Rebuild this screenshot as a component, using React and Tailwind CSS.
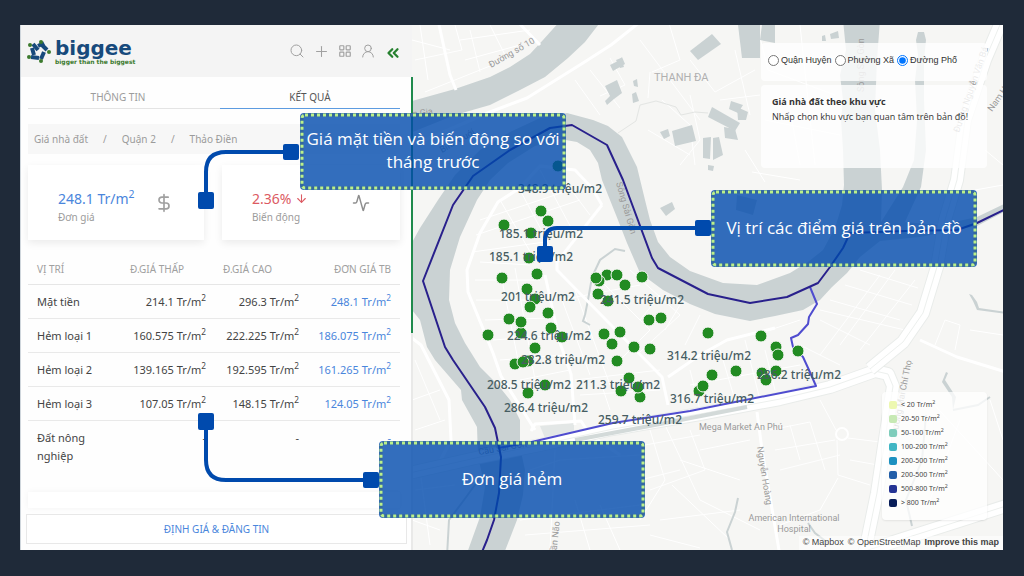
import React, { useState } from "react"
import {
  Activity,
  ArrowDown,
  ChevronsLeft,
  DollarSign,
  LayoutGrid,
  Plus,
  Search,
  UserRound
} from "lucide-react"

const priceRows = [
  { name: "Mặt tiền", low: "214.1", high: "296.3", avg: "248.1" },
  { name: "Hẻm loại 1", low: "160.575", high: "222.225", avg: "186.075" },
  { name: "Hẻm loại 2", low: "139.165", high: "192.595", avg: "161.265" },
  { name: "Hẻm loại 3", low: "107.05", high: "148.15", avg: "124.05" },
  { name: "Đất nông nghiệp", low: null, high: null, avg: null }
]

const legend = [
  { label: "< 20", color: "bg-[#edf8b1]" },
  { label: "20-50", color: "bg-[#c7e9b4]" },
  { label: "50-100", color: "bg-[#7fcdbb]" },
  { label: "100-200", color: "bg-[#41b6c4]" },
  { label: "200-500", color: "bg-[#1d91c0]" },
  { label: "200-500", color: "bg-[#225ea8]" },
  { label: "500-800", color: "bg-[#253494]" },
  { label: "> 800", color: "bg-[#081d58]" }
]

const levels = ["Quận Huyện", "Phường Xã", "Đường Phố"]

const points = [
  [558, 166], [541, 211], [548, 221], [504, 225], [531, 233], [529, 258], [537, 274],
  [502, 278], [527, 289], [535, 299], [530, 307], [548, 313], [509, 319], [521, 333],
  [521, 322], [551, 328], [562, 337], [488, 335], [535, 348], [515, 364], [528, 361],
  [523, 362], [607, 275], [599, 281], [596, 278], [617, 275], [625, 285], [642, 277],
  [608, 301], [598, 294], [649, 320], [661, 318], [604, 334], [620, 332], [612, 344],
  [634, 347], [650, 349], [617, 361], [708, 333], [545, 385], [528, 393], [629, 378],
  [621, 391], [640, 397], [638, 387], [761, 336], [776, 347], [778, 355], [798, 351],
  [712, 375], [699, 391], [703, 386], [736, 371], [762, 373], [776, 371], [766, 380]
]

const priceLabels = [
  [560, 193, "348.9"], [541, 238, "185.1"], [531, 261, "185.1"], [538, 301, "201"],
  [642, 304, "241.5"], [549, 340, "224.6"], [563, 364, "282.8"], [529, 389, "208.5"],
  [618, 389, "211.3"], [546, 412, "286.4"], [640, 424, "259.7"], [709, 360, "314.2"],
  [712, 403, "316.7"], [799, 379, "286.2"]
]

const water = [
  // upper channel
  "M405 103 L455 89 L490 77 L510 67 L530 54 L543 40 L561 20 L602 20 L585 42 L568 58 L545 77 L520 90 L490 105 L455 115 L405 135Z",
  // main loop
  "M405 255 L420 228 L438 200 L455 175 L480 150 L510 132 L540 118 L567 113 L593 120 L608 126 L622 137 L637 167 L645 200 L650 220 L658 242 L670 257 L690 271 L723 283 L757 285 L790 273 L808 262 L823 250 L835 228 L842 205 L844 185 L843 150 L841 120 L843 100 L840 75 L846 50 L843 20 L880 20 L877 60 L875 110 L880 150 L882 190 L881 222 L903 187 L914 160 L917 120 L915 80 L918 55 L916 40 L918 32 L924 32 L926 40 L924 60 L924 100 L926 150 L921 187 L905 222 L940 225 L977 217 L1006 203 L1006 211 L977 226 L920 237 L880 241 L860 257 L847 273 L832 287 L820 300 L803 310 L775 316 L750 321 L715 314 L690 304 L663 290 L640 273 L627 243 L616 215 L602 180 L598 163 L590 150 L577 142 L560 139 L535 146 L508 163 L490 180 L477 200 L460 237 L450 270 L449 300 L455 323 L465 343 L480 367 L498 385 L510 400 L520 420 L520 447 L525 470 L523 495 L517 520 L503 556 L466 556 L480 517 L485 487 L478 457 L477 427 L462 400 L461 390 L448 375 L435 360 L427 347 L420 320 L412 310 L405 310Z",
  "M977 302 L972 295 L969 294 L973 301 L977 310 L1006 314 L1006 312 L979 308Z",
  "M946 372 L942 382 L952 397 L953 410 L956 397 L945 380 L948 373Z"
]

const creeks = [
  "M585 315 L588 300 L592 277 L600 260 L615 249 L625 251",
  "M585 315 L583 321 L590 325",
  "M953 410 L978 405 L990 397",
  "M926 415 L922 460 L906 500 L912 526",
  "M732 550 L727 532 L735 512 L738 498",
  "M808 523 L815 533 L828 543",
  "M447 556 L449 520 L464 500 L480 478"
]

const roads = [
  "M408 147 L490 112 L527 98 L583 63 L611 45 L640 22",
  "M438 20 L450 75 L456 90",
  "M516 20 L540 45",
  "M520 188 L498 202 L480 233 L467 270 L468 292 L493 353 L501 376 L535 430",
  "M602 205 L557 262 L557 270 L662 377 L668 405",
  "M545 275 L560 343 L571 374 L575 425",
  "M602 205 L592 188 L575 170 L540 166 L520 188",
  "M668 377 L700 355 L727 340 L775 328",
  "M408 335 L421 345 L449 400 L451 440 L438 465",
  "M531 431 L535 424 L581 421 L590 435 L620 455",
  "M757 412 L762 450 L780 556",
  "M920 340 L957 357 L1006 372"
]

const highways = [
  "M405 474 L480 457 L540 445 L613 429 L700 414 L780 399 L830 387 L875 371 L888 374 L893 386 L877 493 L864 556",
  "M870 369 L903 342 L923 313 L937 267 L945 220 L957 180 L965 120 L985 60 L1002 20",
  "M862 552 L1006 506"
]

const streets = [
  "M420 25 L428 80 M455 25 L462 50 L415 60 M412 40 L450 50 M465 60 L520 45 M470 30 L480 72 M490 25 L505 55 M460 40 L530 30 M425 92 L490 66",
  "M575 80 L600 115 M590 70 L620 108 M610 58 L625 85 L600 96 M640 40 L700 120 M668 20 L680 60 L652 72 M650 72 L648 98 M662 100 L690 125 L695 165 M690 95 L700 140 L680 165 M648 130 L690 155",
  "M690 60 L715 92 L755 70 M735 50 L750 115 M720 100 L760 95 M757 25 L768 70 L835 95 M765 120 L840 135 M800 25 L815 165 M790 110 L800 165 M745 150 L765 182 M752 172 L800 180",
  "M480 220 L570 190 M476 235 L580 200 M472 252 L545 242 M500 200 L535 260 M520 190 L552 250 M540 170 L575 235 M560 175 L590 215 M480 262 L530 265",
  "M475 280 L540 280 M476 300 L545 300 M485 320 L550 318 M493 340 L560 335 M500 360 L565 355 M500 270 L520 370 M515 268 L535 380",
  "M562 300 L590 375 M575 290 L610 385 M600 280 L650 330 L620 360 M630 270 L680 315 L640 352 M660 295 L640 320 M680 305 L665 330 M700 315 L685 345 M560 300 L640 285",
  "M520 380 L570 370 M575 380 L660 370 M580 395 L660 390 M600 380 L610 410 M690 370 L700 410 M720 350 L735 400 M745 340 L760 400 M690 385 L800 365 M770 330 L800 320 M775 390 L765 350",
  "M820 310 L905 330 M830 300 L900 320 M845 285 L912 305 M860 270 L918 288 M840 345 L895 270 M820 355 L880 275 M860 350 L915 280 M800 345 L840 365 M880 260 L925 268 M820 320 L870 345",
  "M650 430 L665 480 L640 520 M665 425 L700 500 M690 430 L705 470 L650 490 M645 445 L700 435 M700 450 L750 440 M680 460 L740 480 M672 485 L730 540 M660 520 L740 510 M700 500 L760 530 M650 535 L700 548",
  "M770 430 L810 422 L825 470 M775 450 L835 440 M780 470 L840 455 M790 425 L800 460 M820 400 L836 430 M848 438 L880 442 M837 440 L838 475 L870 485 M838 478 L820 510 L780 525 M850 460 L878 465",
  "M530 470 L560 460 L640 455 M555 450 L550 550 M520 520 L640 505 M525 535 L650 525 M575 500 L590 550 M600 505 L620 550 M640 480 L680 470",
  "M935 345 L945 320 L960 325 L955 350 M970 330 L1003 335 M930 400 L1003 480 M960 420 L930 500 M990 400 L1003 440 M985 150 L1003 165 M975 190 L1003 185",
  "M415 360 L440 420 M412 400 L440 390 M415 490 L455 485 M412 520 L440 530 M420 470 L430 545 M445 420 L415 430"
]

const buildings = [
  "690,51 712,34 721,44 698,60",
  "610,65 618,61 622,57 625,64 613,71", "616,60 621,58 624,67 620,68",
  "605,86 617,80 622,93 614,99 607,105 605,101 610,96",
  "633,81 637,79 638,87 634,86", "632,94 636,92 639,101 633,103",
  "708,117 712,107 740,123 735,131", "731,101 743,105 738,113 729,109",
  "672,131 692,125 696,141 675,146", "660,132 668,129 670,136 664,139",
  "703,138 711,137 710,159 703,158", "713,138 719,137 723,155 713,160",
  "724,127 735,129 738,140 725,138", "737,107 748,112 746,120 738,120", "708,165 714,166 713,171 708,170",
  "738,25 760,25 760,58 742,58", "762,25 775,25 775,43 760,40",
  "660,208 672,202 675,209 666,216", "737,195 757,200 753,215 736,210",
  "822,36 825,35 826,41 822,41", "830,34 838,31 839,38 831,39"
]

const places = [
  { x: 491, y: 68, rotate: -30, text: "Đường số 10" },
  { x: 413, y: 117, rotate: -8, text: "n Gia" },
  { x: 442, y: 153, rotate: -30, text: "Bình Quới" },
  { x: 616, y: 183, rotate: 74, text: "Sông Sài Gòn" },
  { x: 864, y: 92, rotate: -90, text: "Sông Sài Gòn" },
  { x: 959, y: 133, rotate: -71, text: "Đường Nguyễn Văn Bá" },
  { x: 992, y: 112, rotate: -55, text: "Nam Hòa" },
  { x: 897, y: 436, rotate: -79, text: "Đường Mai Chí Thọ" },
  { x: 757, y: 447, rotate: 81, text: "Nguyễn Hoàng" },
  { x: 556, y: 558, rotate: -84, text: "Trần Não" },
  { x: 479, y: 455, rotate: -10, text: "Cầu Sài Gòn" }
]

function PricePerMeter({ value }) {
  if (!value) return "-"
  return (
    <>
      {value} Tr/m<sup>2</sup>
    </>
  )
}

function Logo() {
  return (
    <a href="#" className="flex items-center gap-1" aria-label="biggee">
      <svg viewBox="0 0 24 24" className="h-6 w-6">
        <g stroke="#174a7c" strokeWidth="4">
          <path d="M5 9l2 7" />
          <path d="M6 5l5 6" />
          <path d="M11 7l6-3" />
          <path d="M15 6l5 5" />
          <path d="M17 13l-3 7" />
          <path d="M4 18l8 1" />
        </g>
        <g fill="#3c7a2e">
          <circle cx="14" cy="3" r="2" />
          <circle cx="3" cy="6" r="2" />
          <circle cx="22" cy="13" r="2" />
          <circle cx="2" cy="18" r="2" />
          <circle cx="14" cy="22" r="2" />
        </g>
      </svg>
      <span className="flex flex-col whitespace-nowrap font-['DejaVu_Sans'] font-bold">
        <span className="text-[20px] leading-5 text-[#174a7c]">biggee</span>
        <span className="text-[6px] leading-[7px] text-[#3c7a2e]">bigger than the biggest</span>
      </span>
    </a>
  )
}

function IconButton({ label, children }) {
  return (
    <button type="button" aria-label={label} className="text-[#a0a0a0]">
      {children}
    </button>
  )
}

function Sidebar() {
  return (
    <aside className="relative flex w-[392px] shrink-0 flex-col border-l border-[#cfd6dc] bg-[#fefefe] text-[#444]">
      <header className="flex h-[52px] items-center justify-between bg-[#f4f4f4] pl-[6px] pr-[10px]">
        <Logo />
        <div className="flex items-center gap-2">
          <IconButton label="Tìm kiếm"><Search size={16} strokeWidth={1.5} /></IconButton>
          <IconButton label="Thêm"><Plus size={17} strokeWidth={1.5} /></IconButton>
          <IconButton label="Danh mục"><LayoutGrid size={14} strokeWidth={2} /></IconButton>
          <IconButton label="Tài khoản"><UserRound size={16} strokeWidth={1.5} /></IconButton>
          <button type="button" aria-label="Thu gọn" className="pt-1 text-[#26802f]">
            <ChevronsLeft size={18} strokeWidth={3} />
          </button>
        </div>
      </header>

      <nav className="ml-[7px] mr-3 flex text-center text-[10px] leading-[14px]">
        <button type="button" className="h-8 flex-1 border-b border-[#e4e4e4] pt-2 pr-3 text-[#9c9c9c]">THÔNG TIN</button>
        <button type="button" className="h-8 w-[180px] border-b border-[#5c9be0] pt-2 text-[#555]">KẾT QUẢ</button>
      </nav>

      <nav className="ml-[7px] mr-3 mt-[15px] flex h-[30px] items-center gap-[15px] bg-[#f7f7f7] px-[6px] pt-px text-[10px] text-[#9b9b9b]">
        <a href="#">Giá nhà đất</a>
        <span>/</span>
        <a href="#">Quận 2</a>
        <span>/</span>
        <a href="#">Thảo Điền</a>
      </nav>

      <div className="ml-[7px] mr-3 mt-[11px] flex gap-[18px]">
        <div className="flex h-[75px] w-[176px] items-center justify-between bg-white pl-[30px] pr-[30px] shadow-[0_3px_8px_rgba(0,0,0,0.08)]">
          <div className="pt-2">
            <p className="text-sm leading-5 text-[#4a86dc]"><PricePerMeter value="248.1" /></p>
            <p className="text-[10px] leading-4 text-[#9b9b9b]">Đơn giá</p>
          </div>
          <DollarSign size={20} strokeWidth={2} className="text-[#a0a0a0]" />
        </div>
        <div className="flex h-[75px] flex-1 items-center justify-between bg-white pl-[30px] pr-[30px] shadow-[0_3px_8px_rgba(0,0,0,0.08)]">
          <div className="pt-2">
            <p className="flex items-center gap-1 text-sm leading-5 text-[#dc5a62]">
              2.36% <ArrowDown size={13} strokeWidth={2} />
            </p>
            <p className="text-[10px] leading-4 text-[#9b9b9b]">Biến động</p>
          </div>
          <Activity size={18} strokeWidth={2} className="text-[#8e8e8e]" />
        </div>
      </div>

      <div className="ml-[7px] mr-3 mt-3">
        <table className="w-full table-fixed text-[11px]">
          <thead>
            <tr className="h-8 border-b border-[#e6e6e6] text-[10px] text-[#a0a0a0]">
              <th className="px-[9px] pt-1 text-left font-normal">VỊ TRÍ</th>
              <th className="px-[9px] pt-1 text-left font-normal">Đ.GIÁ THẤP</th>
              <th className="px-[9px] pt-1 text-left font-normal">Đ.GIÁ CAO</th>
              <th className="px-[9px] pt-1 text-right font-normal">ĐƠN GIÁ TB</th>
            </tr>
          </thead>
          <tbody>
            {priceRows.map((row) => (
              <tr key={row.name} className="border-b border-[#e9e9e9] align-top leading-[18px] last:border-b-0">
                <td className="pb-[7px] pl-[9px] pr-6 pt-2">{row.name}</td>
                <td className="whitespace-nowrap pr-2 pt-2 text-right"><PricePerMeter value={row.low} /></td>
                <td className="whitespace-nowrap pr-2 pt-2 text-right"><PricePerMeter value={row.high} /></td>
                <td className="whitespace-nowrap pr-[9px] pt-2 text-right text-[#4a86dc]"><PricePerMeter value={row.avg} /></td>
              </tr>
            ))}
          </tbody>
        </table>
      </div>

      <div className="mt-auto ml-[7px] mr-3 h-4 bg-white shadow-[0_0_6px_rgba(0,0,0,0.05)]" />
      <button
        type="button"
        className="relative mb-[6px] ml-[5px] mr-[5px] mt-[6px] h-[30px] border border-[#e8e8e8] bg-white text-[10px] text-[#4a86dc]"
      >
        ĐỊNH GIÁ &amp; ĐĂNG TIN
      </button>

      {/* scroll track on the edge of the map */}
      <div className="absolute -right-px bottom-0 top-[52px] z-10 w-[2px] bg-[#e9e9e8]">
        <div className="h-64 bg-[#1f8a4c]" />
      </div>
    </aside>
  )
}

function MapCanvas() {
  return (
    <svg
      className="absolute inset-0 h-full w-full"
      viewBox="412 25 591 525"
      preserveAspectRatio="xMidYMid slice"
      role="img"
      aria-label="Bản đồ Thảo Điền"
    >
      <rect x="0" y="0" width="1600" height="1000" fill="#f6f6f4" />
      <g fill="none" stroke="#ffffff" strokeLinejoin="round">
        {streets.map((d) => <path key={d} d={d} strokeWidth="1" />)}
      </g>
      <g fill="#cad2d3">
        {water.map((d) => <path key={d} d={d} />)}
        {buildings.map((p) => <polygon key={p} points={p} />)}
      </g>
      <g fill="none" stroke="#cad2d3" strokeWidth="2">
        {creeks.map((d) => <path key={d} d={d} />)}
      </g>
      <path
        d="M618 133 L636 121 L640 105 L656 101 L663 103 L676 107 L681 115 L695 112 L708 113"
        fill="none"
        stroke="#e3e5e3"
      />
      <path d="M540 426 L574 423 L574 434 L545 438Z" fill="#e3e7e6" />
      <g fill="none" stroke="#ffffff" strokeLinejoin="round">
        {roads.map((d) => <path key={d} d={d} strokeWidth="3" />)}
        {highways.map((d) => (
          <React.Fragment key={d}>
            <path d={d} stroke="#e9ecea" strokeWidth="14" />
            <path d={d} strokeWidth="12" />
            <path d={d} stroke="#edf0ee" strokeWidth="1" />
          </React.Fragment>
        ))}
        <circle cx="842" cy="434" r="6" strokeWidth="2" />
      </g>
      <path d="M575 440 L660 424 L747 407" fill="none" stroke="#d3dad9" strokeWidth="4" />

      <g fill="#9a9a9a" fontFamily="Roboto, sans-serif" fontSize="9">
        {places.map((p) => (
          <text key={p.x + p.text} transform={`translate(${p.x} ${p.y}) rotate(${p.rotate})`}>{p.text}</text>
        ))}
        <text x="699" y="430">Mega Market An Phú</text>
        <text x="794" y="521" textAnchor="middle">American International</text>
        <text x="794" y="532" textAnchor="middle">Hospital</text>
      </g>
      <text x="654" y="81" fill="#b0b0b0" fontFamily="Roboto, sans-serif" fontSize="11">THANH ĐA</text>

      <g fill="none" strokeLinejoin="round" strokeWidth="2">
        <path
          stroke="#4f4ccf"
          d="M810 287 L817 304 L809 317 L808 324 L798 335 L791 338 L793 347 L803 357 L809 370 L816 386 L690 411 L613 423 L527 443 L498 448"
        />
        <path
          stroke="#29208c"
          d="M482 552 L487 540 L494 520 L499 493 L501 457 L495 428 L485 407 L453 360 L445 347 L423 281 L453 205 L473 176 L510 150 L550 128 L572 125 L607 145 L623 180 L652 258 L658 268 L708 294 L750 303 L787 297 L818 283 L830 267 L843 248 L850 233 L905 231 L957 230 L977 223 L1006 209"
        />
      </g>

      <g fill="#228b22" stroke="#f6f6f4" strokeWidth="1">
        {points.map(([x, y]) => <circle key={`${x}-${y}`} cx={x} cy={y} r="6" />)}
      </g>
      <g
        fill="#465d62"
        fontFamily="Noto Sans, sans-serif"
        fontSize="12"
        fontWeight="500"
        textAnchor="middle"
      >
        {priceLabels.map(([x, y, value]) => (
          <text key={`${x}-${y}`} x={x} y={y}>{value} triệu/m2</text>
        ))}
      </g>
    </svg>
  )
}

function MapView() {
  const [level, setLevel] = useState("Đường Phố")

  return (
    <main className="relative flex min-w-0 flex-1 flex-col items-end overflow-hidden">
      <MapCanvas />

      <div className="relative mr-4 mt-[18px] flex w-[226px] flex-col gap-1">
        <div
          role="radiogroup"
          aria-label="Khu vực"
          className="flex h-[38px] items-center gap-[3px] rounded-sm bg-white/80 pb-[3px] pl-[7px] font-['Liberation_Sans'] text-[9px] text-[#333]"
        >
          {levels.map((name) => (
            <label key={name} className="flex items-center gap-[2px] whitespace-nowrap">
              <input
                type="radio"
                name="level"
                className="h-[11px] w-[11px] accent-[#0075ff]"
                checked={level === name}
                onChange={() => setLevel(name)}
              />
              {name}
            </label>
          ))}
        </div>
        <section className="h-[83px] whitespace-nowrap rounded-sm bg-white/80 px-[11px] pt-[9px] font-['Open_Sans'] text-[9px] leading-[15px] text-[#333]">
          <h2 className="font-bold">Giá nhà đất theo khu vực</h2>
          <p>Nhấp chọn khu vực bạn quan tâm trên bản đồ!</p>
        </section>
      </div>

      <ul className="relative mb-4 mr-4 mt-auto flex h-32 w-[105px] flex-col rounded-sm bg-white/75 pl-[7px] pt-[6px] text-[7px] text-[#444] shadow-[0_1px_2px_rgba(0,0,0,0.08)]">
        {legend.map((item, i) => (
          <li key={i} className="flex h-[14px] items-center gap-1">
            <span className={`h-2 w-2 rounded-[2px] ${item.color}`} />
            <span><PricePerMeter value={item.label} /></span>
          </li>
        ))}
      </ul>

      <footer className="relative flex h-[14px] items-center gap-1 bg-white/50 px-1 font-['Liberation_Sans'] text-[9px] text-[#444]">
        <a href="#">© Mapbox</a>
        <a href="#">© OpenStreetMap</a>
        <a href="#" className="font-bold">Improve this map</a>
      </footer>
    </main>
  )
}

function Callout({ className, children }) {
  return (
    <div
      className={`absolute flex h-[77px] w-[266px] items-center justify-center rounded bg-[#004aad]/80 px-1 text-center font-['Open_Sans'] text-[17px] leading-[23px] text-white ${className}`}
    >
      <svg className="absolute inset-0 h-full w-full p-[2px]" overflow="visible" aria-hidden="true">
        <rect width="100%" height="100%" rx="3" fill="none" stroke="#35689c" strokeWidth="3" />
        <rect width="100%" height="100%" rx="3" fill="none" stroke="#baf08a" strokeWidth="3" strokeDasharray="3 3" />
      </svg>
      <p className="relative pb-[3px]">{children}</p>
    </div>
  )
}

function Annotations() {
  return (
    <div className="pointer-events-none absolute inset-0 z-20">
      <svg className="absolute left-0 top-0" width="983" height="525" viewBox="20 25 983 525" aria-hidden="true">
        <g fill="none" stroke="#004aad" strokeWidth="4">
          <path d="M206 200 V172 Q206 152 226 152 H292" />
          <path d="M545 254 V240 Q545 228 557 228 H703" />
          <path d="M206 421 V460 Q206 480 226 480 H371" />
        </g>
        <g fill="#004aad">
          <rect x="198" y="192" width="16" height="17" rx="2" />
          <rect x="283" y="144" width="16" height="16" rx="2" />
          <rect x="537" y="246" width="16" height="16" rx="2" />
          <rect x="695" y="220" width="16" height="16" rx="2" />
          <rect x="198" y="413" width="16" height="17" rx="2" />
          <rect x="363" y="472" width="16" height="16" rx="2" />
        </g>
      </svg>
      <Callout className="left-[280px] top-[88px]">Giá mặt tiền và biến động so với tháng trước</Callout>
      <Callout className="left-[691px] top-[165px]">Vị trí các điểm giá trên bản đồ</Callout>
      <Callout className="left-[359px] top-[416px]">Đơn giá hẻm</Callout>
    </div>
  )
}

export default function App() {
  return (
    <div className="flex min-h-screen bg-[#1f2a39] pb-[26px] pl-5 pr-[21px] pt-[25px] font-['Noto_Sans',sans-serif]">
      <div className="relative flex min-w-0 flex-1">
        <Sidebar />
        <MapView />
        <Annotations />
      </div>
    </div>
  )
}
